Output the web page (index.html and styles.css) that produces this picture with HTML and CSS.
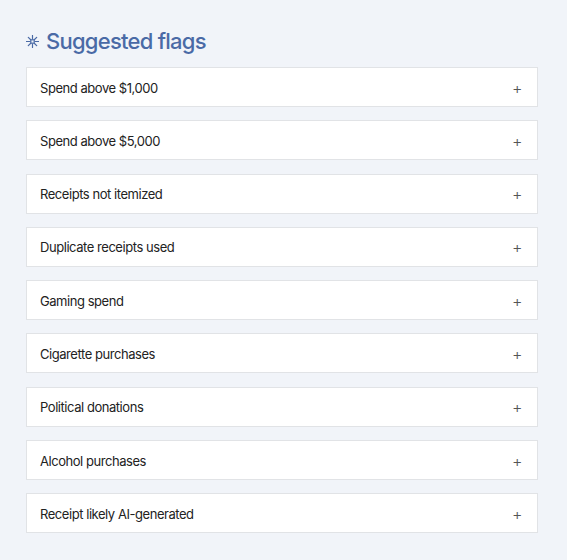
FILE: index.html
```html
<!DOCTYPE html>
<html lang="en">
<head>
    <meta charset="UTF-8">
    <title>Suggested flags</title>
    <link rel="stylesheet" href="styles.css">
</head>
<body>
    <div class="panel">
        <h2 class="title">
            <svg class="spark" width="13" height="13" viewBox="0 0 13 13" fill="none" stroke="currentColor" stroke-width="1.2" stroke-linecap="round">
                <path d="M6.5 0.5v3.5M6.5 9v3.5M0.5 6.5h3.5M9 6.5h3.5M2.3 2.3l2.2 2.2M8.5 8.5l2.2 2.2M10.7 2.3l-2.2 2.2M4.5 8.5l-2.2 2.2"/>
                <rect x="4.8" y="4.8" width="3.4" height="3.4"/>
            </svg>
            Suggested flags
        </h2>
        <ul class="flags">
            <li class="flag"><span>Spend above $1,000</span><span class="add">+</span></li>
            <li class="flag"><span>Spend above $5,000</span><span class="add">+</span></li>
            <li class="flag"><span>Receipts not itemized</span><span class="add">+</span></li>
            <li class="flag"><span>Duplicate receipts used</span><span class="add">+</span></li>
            <li class="flag"><span>Gaming spend</span><span class="add">+</span></li>
            <li class="flag"><span>Cigarette purchases</span><span class="add">+</span></li>
            <li class="flag"><span>Political donations</span><span class="add">+</span></li>
            <li class="flag"><span>Alcohol purchases</span><span class="add">+</span></li>
            <li class="flag"><span>Receipt likely AI-generated</span><span class="add">+</span></li>
        </ul>
    </div>
</body>
</html>
```
FILE: styles.css
```css
body {
    margin: 0;
    background-color: #f1f4f9;
    font-family: Inter, "Liberation Sans", sans-serif;
}
.panel {
    padding: 27px 29px 20px 26px;
}
.title {
    display: flex;
    align-items: center;
    gap: 7px;
    margin: 0 0 12px;
    font-size: 22px;
    font-weight: 500;
    color: #4a6aa6;
    letter-spacing: -0.75px;
    height: 28px;
}
.spark {
    color: #4a6aa6;
    margin-top: 1px;
}
.flags {
    list-style: none;
    margin: 0;
    padding: 0;
    display: flex;
    flex-direction: column;
    gap: 13.3px;
}
.flag {
    display: flex;
    justify-content: space-between;
    align-items: center;
    height: 37px;
    padding: 1px 15px 0 13px;
    background: white;
    border: 1px solid #e1e3e6;
    font-size: 13px;
    letter-spacing: -0.45px;
    color: #222;
}
.add {
    font-size: 16px;
    font-weight: 300;
    color: #555;
}
```
